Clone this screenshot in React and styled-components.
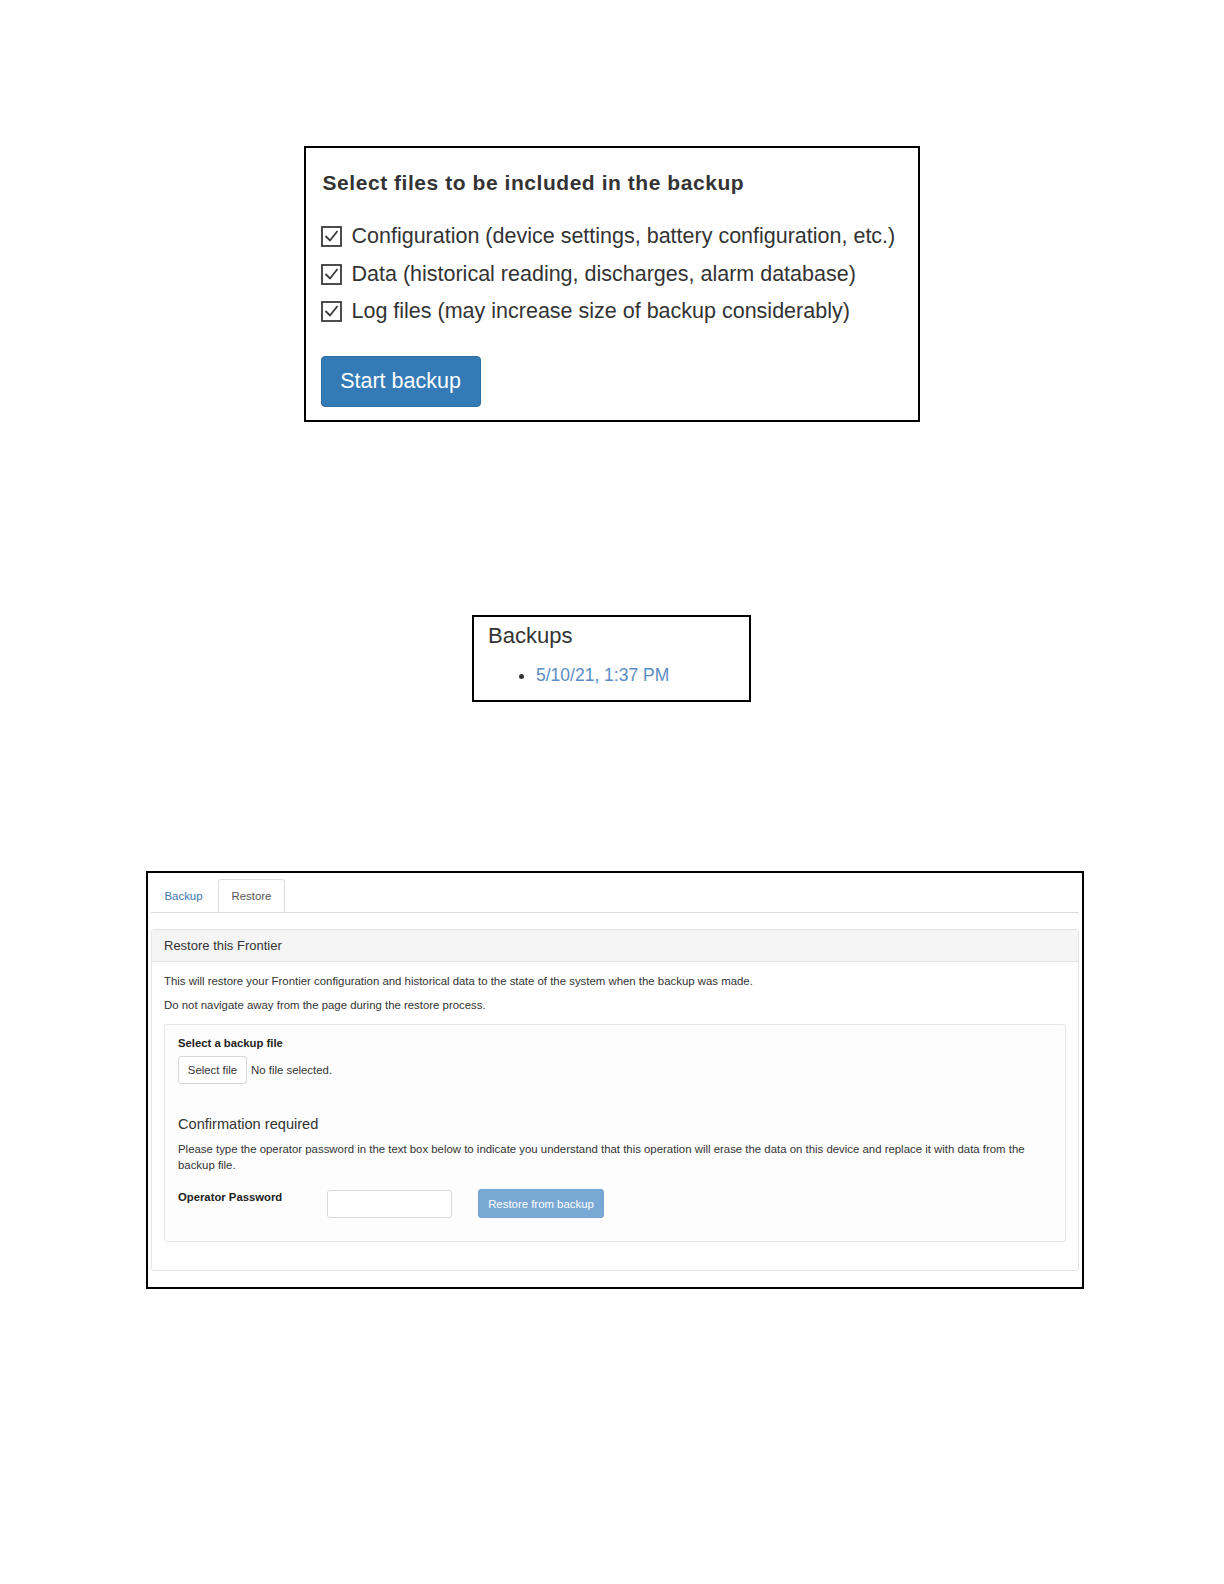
import React from "react";
import styled, { createGlobalStyle } from "styled-components";

const GlobalStyle = createGlobalStyle`
  body {
    margin: 0;
    background: #ffffff;
    font-family: "Liberation Sans", Arial, sans-serif;
    color: #333333;
  }
`;

const Page = styled.div`
  display: flex;
  flex-direction: column;
  align-items: center;
  padding-top: 146px;
  min-height: 1584px;
  box-sizing: border-box;
`;

const FramedShot = styled.div`
  border: 2px solid #000;
  box-sizing: border-box;
  background: #fff;
`;

/* ---------- backup selection ---------- */

const SelectBox = styled(FramedShot)`
  width: 616px;
  height: 276px;
  padding: 23px 17px 14px 15px;
  margin-left: -1px;
`;

const SelectTitle = styled.h3`
  margin: 0 0 23px 2px;
  font-size: 21px;
  line-height: 24px;
  font-weight: bold;
  letter-spacing: 0.55px;
  color: #333;
`;

const CheckList = styled.div`
  display: flex;
  flex-direction: column;
`;

const CheckRow = styled.label`
  display: flex;
  align-items: center;
  gap: 10px;
  height: 37.5px;
  font-size: 21.5px;
  color: #333;
`;

const StartButton = styled.button`
  margin-top: 25px;
  width: 160px;
  height: 51px;
  border: 1px solid #2e6da4;
  border-radius: 4px;
  background: #337ab7;
  color: #fff;
  font-family: inherit;
  font-size: 21.5px;
  padding: 0;
`;

const CheckIcon = () => (
  <svg width="21" height="21" viewBox="0 0 21 21" fill="none">
    <rect x="1" y="1" width="19" height="19" stroke="#3a3a3a" strokeWidth="1.8" />
    <polyline points="4.5,10 9,14.5 16.5,5" stroke="#3a3a3a" strokeWidth="1.8" fill="none" />
  </svg>
);

/* ---------- backups list ---------- */

const BackupsBox = styled(FramedShot)`
  margin-top: 193px;
  margin-left: -1px;
  width: 279px;
  height: 87px;
  padding: 5px 13px 0 14px;
`;

const BackupsTitle = styled.div`
  font-size: 22px;
  line-height: 28px;
  color: #333;
`;

const BackupList = styled.ul`
  margin: 14px 0 0 0;
  padding-left: 48px;
  font-size: 17.5px;
  line-height: 22px;
  color: #333;
`;

const BackupLink = styled.a`
  color: #5b8cc3;
  text-decoration: none;
`;

/* ---------- restore tab ---------- */

const RestoreShot = styled(FramedShot)`
  margin-top: 169px;
  margin-left: 6px;
  width: 938px;
  height: 418px;
  padding: 6px 3px 0 3px;
`;

const TabBar = styled.div`
  display: flex;
  gap: 2px;
  border-bottom: 1px solid #dddddd;
  height: 33px;
`;

const Tab = styled.div`
  height: 33px;
  box-sizing: border-box;
  padding: 0 12.5px;
  display: flex;
  align-items: center;
  font-size: 11.4px;
  color: ${(p) => (p.$active ? "#555" : "#3b76ae")};
  border: 1px solid ${(p) => (p.$active ? "#dddddd" : "transparent")};
  border-bottom-color: ${(p) => (p.$active ? "#fff" : "transparent")};
  border-radius: 3px 3px 0 0;
  background: #fff;
  margin-bottom: -1px;
`;

const Panel = styled.div`
  margin-top: 16px;
  border: 1px solid #e4e4e4;
  border-radius: 3px;
  background: #fff;
`;

const PanelHeading = styled.div`
  height: 32px;
  box-sizing: border-box;
  padding: 0 12px;
  display: flex;
  align-items: center;
  background: #f5f5f5;
  border-bottom: 1px solid #e4e4e4;
  font-size: 13px;
  color: #333;
`;

const PanelBody = styled.div`
  padding: 11px 12px 28px 12px;
`;

const Note = styled.p`
  margin: 0 0 7px 0;
  font-size: 11.4px;
  line-height: 17px;
  color: #333;
`;

const Well = styled.div`
  margin-top: 10px;
  border: 1px solid #e6e6e6;
  border-radius: 3px;
  background: #fdfdfd;
  padding: 10px 12px 23px 13px;
`;

const FieldLabel = styled.div`
  font-size: 11.3px;
  line-height: 17px;
  font-weight: bold;
  color: #222;
`;

const FileRow = styled.div`
  margin-top: 4px;
  display: flex;
  align-items: center;
  gap: 4px;
  font-size: 11.4px;
`;

const FileButton = styled.button`
  width: 69px;
  height: 28px;
  border: 1px solid #d6d6d6;
  border-radius: 3px;
  background: #fff;
  color: #333;
  font-family: inherit;
  font-size: 11.4px;
  padding: 0;
`;

const SubHeading = styled.div`
  margin-top: 30px;
  font-size: 14.6px;
  line-height: 20px;
  color: #333;
`;

const Warning = styled.p`
  margin: 7px 0 0 0;
  font-size: 11.4px;
  line-height: 16px;
  color: #333;
`;

const PasswordRow = styled.div`
  margin-top: 16px;
  display: flex;
  align-items: flex-start;
`;

const PasswordLabel = styled(FieldLabel)`
  width: 149px;
`;

const PasswordInput = styled.input`
  width: 125px;
  height: 28px;
  margin-top: 1px;
  box-sizing: border-box;
  border: 1px solid #d9d9d9;
  border-radius: 3px;
  background: #fff;
`;

const RestoreButton = styled.button`
  margin-left: 26px;
  width: 126px;
  height: 29px;
  border: 1px solid #74a3d0;
  border-radius: 3px;
  background: #7aa8d4;
  color: #fff;
  font-family: inherit;
  font-size: 11.4px;
  padding: 0;
`;

const options = [
  "Configuration (device settings, battery configuration, etc.)",
  "Data (historical reading, discharges, alarm database)",
  "Log files (may increase size of backup considerably)",
];

export default function App() {
  return (
    <>
      <GlobalStyle />
      <Page>
        <SelectBox>
          <SelectTitle>Select files to be included in the backup</SelectTitle>
          <CheckList>
            {options.map((text) => (
              <CheckRow key={text}>
                <CheckIcon />
                {text}
              </CheckRow>
            ))}
          </CheckList>
          <StartButton>Start backup</StartButton>
        </SelectBox>

        <BackupsBox>
          <BackupsTitle>Backups</BackupsTitle>
          <BackupList>
            <li>
              <BackupLink>5/10/21, 1:37 PM</BackupLink>
            </li>
          </BackupList>
        </BackupsBox>

        <RestoreShot>
          <TabBar>
            <Tab>Backup</Tab>
            <Tab $active>Restore</Tab>
          </TabBar>
          <Panel>
            <PanelHeading>Restore this Frontier</PanelHeading>
            <PanelBody>
              <Note>
                This will restore your Frontier configuration and historical data to the state of the system when the backup was made.
              </Note>
              <Note>Do not navigate away from the page during the restore process.</Note>
              <Well>
                <FieldLabel>Select a backup file</FieldLabel>
                <FileRow>
                  <FileButton>Select file</FileButton>
                  No file selected.
                </FileRow>
                <SubHeading>Confirmation required</SubHeading>
                <Warning>
                  Please type the operator password in the text box below to indicate you understand that this operation will erase the data on this device and replace it with data from the backup file.
                </Warning>
                <PasswordRow>
                  <PasswordLabel>Operator Password</PasswordLabel>
                  <PasswordInput type="password" />
                  <RestoreButton>Restore from backup</RestoreButton>
                </PasswordRow>
              </Well>
            </PanelBody>
          </Panel>
        </RestoreShot>
      </Page>
    </>
  );
}
